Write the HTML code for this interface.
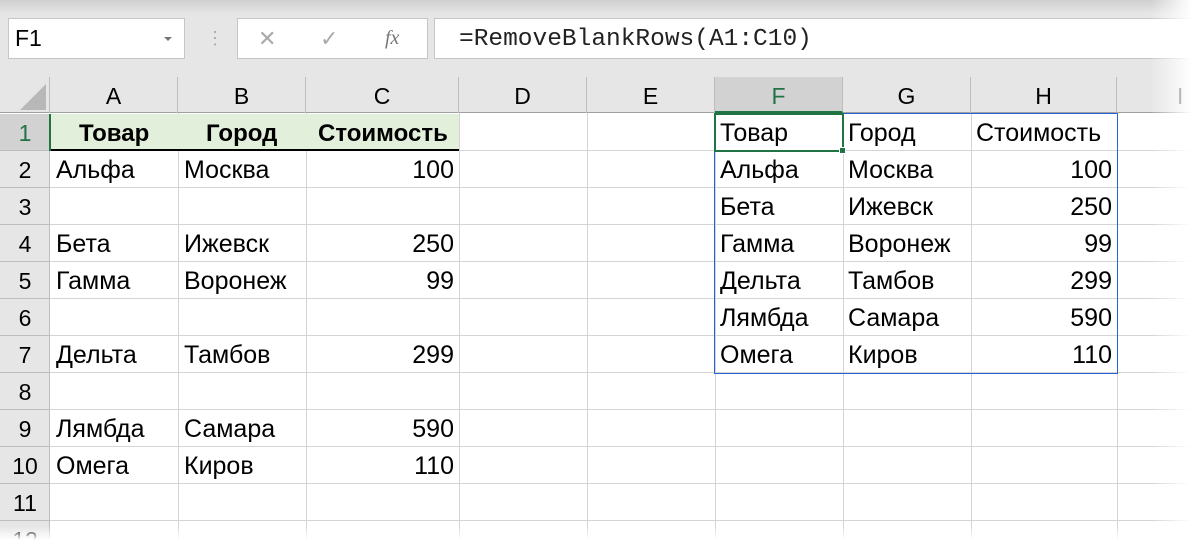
<!DOCTYPE html><html><head><meta charset="utf-8"><style>
html,body{margin:0;width:1202px;height:546px;overflow:hidden}
body{background:#fff;font-family:"Liberation Sans",sans-serif;position:relative}
.a{position:absolute;box-sizing:border-box}
.t{position:absolute;font-size:25px;line-height:37px;color:#000;white-space:nowrap}
.b{font-size:24px;font-weight:bold}
.h{position:absolute;top:77px;height:36px;line-height:38px;text-align:center;font-size:23px;color:#000;border-right:1px solid #bdbdbd;box-sizing:border-box}
.r{position:absolute;left:0;width:50px;height:37px;line-height:39px;text-align:center;font-size:23px;color:#000;background:#e6e6e6;border-bottom:1px solid #bdbdbd;box-sizing:border-box}
</style></head><body>
<div class="a" style="left:0;top:0;width:1202px;height:77px;background:#e6e6e6"></div>
<div class="a" style="left:0;top:0;width:1202px;height:14px;background:linear-gradient(#cfcfcf,#e6e6e6)"></div>
<div class="a" style="left:8px;top:18px;width:177px;height:41px;background:#fff;border:1px solid #c6c6c6"></div>
<div class="t" style="left:15px;top:20px;font-size:23px">F1</div>
<div class="a" style="left:164px;top:37px;width:0;height:0;border-left:4px solid transparent;border-right:4px solid transparent;border-top:4px solid #777"></div>
<div class="t" style="left:206px;top:20px;color:#aaa;font-size:18px">⋮</div>
<div class="a" style="left:237px;top:18px;width:191px;height:41px;background:#fff;border:1px solid #c6c6c6"></div>
<div class="t" style="left:258px;top:20px;color:#aaa;font-size:22px">✕</div>
<div class="t" style="left:320px;top:20px;color:#aaa;font-size:22px">✓</div>
<div class="t" style="left:385px;top:20px;color:#777;font-size:20px;font-family:'Liberation Serif',serif;font-style:italic">fx</div>
<div class="a" style="left:434px;top:18px;width:780px;height:41px;background:#fff;border:1px solid #c6c6c6"></div>
<div class="t" style="left:459px;top:21px;font-family:'Liberation Mono',monospace;font-size:24.5px;color:#222">=RemoveBlankRows(A1:C10)</div>

<div class="a" style="left:0;top:77px;width:1202px;height:36px;background:#e6e6e6;border-bottom:1px solid #a0a0a0"></div>
<div class="a" style="left:20px;top:84px;width:0;height:0;border-left:26px solid transparent;border-bottom:26px solid #b8b8b8"></div>
<div class="h" style="left:0;width:50px;border-right:1px solid #bdbdbd"></div>
<div class="h" style="left:50px;width:128px">A</div>
<div class="h" style="left:178px;width:128px">B</div>
<div class="h" style="left:306px;width:153px">C</div>
<div class="h" style="left:459px;width:128px">D</div>
<div class="h" style="left:587px;width:128px">E</div>
<div class="h" style="left:715px;width:128px;background:#d2d2d2;color:#217346;border-bottom:2px solid #217346">F</div>
<div class="h" style="left:843px;width:128px">G</div>
<div class="h" style="left:971px;width:146px">H</div>
<div class="h" style="left:1117px;width:128px;text-align:left;padding-left:60px;border:none">I</div>

<svg class="a" style="left:0;top:113px" width="1202" height="433">
<g stroke="#d4d4d4" stroke-width="1">
<line x1="178.5" y1="0" x2="178.5" y2="433"/><line x1="306.5" y1="0" x2="306.5" y2="433"/><line x1="459.5" y1="0" x2="459.5" y2="433"/><line x1="587.5" y1="0" x2="587.5" y2="433"/><line x1="715.5" y1="0" x2="715.5" y2="433"/><line x1="843.5" y1="0" x2="843.5" y2="433"/><line x1="971.5" y1="0" x2="971.5" y2="433"/><line x1="1117.5" y1="0" x2="1117.5" y2="433"/>
<line x1="50" y1="37.5" x2="1202" y2="37.5"/><line x1="50" y1="74.5" x2="1202" y2="74.5"/><line x1="50" y1="111.5" x2="1202" y2="111.5"/><line x1="50" y1="148.5" x2="1202" y2="148.5"/><line x1="50" y1="185.5" x2="1202" y2="185.5"/><line x1="50" y1="222.5" x2="1202" y2="222.5"/><line x1="50" y1="259.5" x2="1202" y2="259.5"/><line x1="50" y1="296.5" x2="1202" y2="296.5"/><line x1="50" y1="333.5" x2="1202" y2="333.5"/><line x1="50" y1="370.5" x2="1202" y2="370.5"/><line x1="50" y1="407.5" x2="1202" y2="407.5"/>
</g></svg>
<div class="a" style="left:50px;top:114px;width:409px;height:37px;background:#e2efda;border-bottom:2px solid #000"></div>

<div class="r" style="top:114px;color:#217346;background:#d2d2d2">1</div>
<div class="a" style="left:49px;top:114px;width:2px;height:37px;background:#217346"></div>
<div class="r" style="top:151px">2</div><div class="r" style="top:188px">3</div><div class="r" style="top:225px">4</div><div class="r" style="top:262px">5</div><div class="r" style="top:299px">6</div><div class="r" style="top:336px">7</div><div class="r" style="top:373px">8</div><div class="r" style="top:410px">9</div><div class="r" style="top:447px">10</div><div class="r" style="top:484px">11</div><div class="r" style="top:521px">12</div>
<div class="a" style="left:49px;top:151px;width:1px;height:400px;background:#bdbdbd"></div>

<div class="t b" style="left:79px;top:115px">Товар</div>
<div class="t b" style="left:206px;top:115px">Город</div>
<div class="t b" style="left:318px;top:115px">Стоимость</div>
<div class="t" style="left:56px;top:152px">Альфа</div><div class="t" style="left:184px;top:152px">Москва</div><div class="t" style="right:748px;top:152px">100</div>
<div class="t" style="left:56px;top:226px">Бета</div><div class="t" style="left:184px;top:226px">Ижевск</div><div class="t" style="right:748px;top:226px">250</div>
<div class="t" style="left:56px;top:263px">Гамма</div><div class="t" style="left:184px;top:263px">Воронеж</div><div class="t" style="right:748px;top:263px">99</div>
<div class="t" style="left:56px;top:337px">Дельта</div><div class="t" style="left:184px;top:337px">Тамбов</div><div class="t" style="right:748px;top:337px">299</div>
<div class="t" style="left:56px;top:411px">Лямбда</div><div class="t" style="left:184px;top:411px">Самара</div><div class="t" style="right:748px;top:411px">590</div>
<div class="t" style="left:56px;top:448px">Омега</div><div class="t" style="left:184px;top:448px">Киров</div><div class="t" style="right:748px;top:448px">110</div>

<div class="t" style="left:720px;top:115px">Товар</div><div class="t" style="left:848px;top:115px">Город</div><div class="t" style="left:976px;top:115px">Стоимость</div>
<div class="t" style="left:720px;top:152px">Альфа</div><div class="t" style="left:848px;top:152px">Москва</div><div class="t" style="right:90px;top:152px">100</div>
<div class="t" style="left:720px;top:189px">Бета</div><div class="t" style="left:848px;top:189px">Ижевск</div><div class="t" style="right:90px;top:189px">250</div>
<div class="t" style="left:720px;top:226px">Гамма</div><div class="t" style="left:848px;top:226px">Воронеж</div><div class="t" style="right:90px;top:226px">99</div>
<div class="t" style="left:720px;top:263px">Дельта</div><div class="t" style="left:848px;top:263px">Тамбов</div><div class="t" style="right:90px;top:263px">299</div>
<div class="t" style="left:720px;top:300px">Лямбда</div><div class="t" style="left:848px;top:300px">Самара</div><div class="t" style="right:90px;top:300px">590</div>
<div class="t" style="left:720px;top:337px">Омега</div><div class="t" style="left:848px;top:337px">Киров</div><div class="t" style="right:90px;top:337px">110</div>

<div class="a" style="left:714px;top:113px;width:404px;height:261px;border:1px solid #2563d8"></div>
<div class="a" style="left:714px;top:113px;width:130px;height:39px;border:2px solid #217346"></div>
<div class="a" style="left:839px;top:147px;width:7px;height:7px;background:#217346;border:1px solid #fff"></div>

<div class="a" style="left:1150px;top:0;width:52px;height:546px;background:linear-gradient(90deg,rgba(255,255,255,0),#fff 80%)"></div>
<div class="a" style="left:0;top:526px;width:1202px;height:20px;background:linear-gradient(rgba(255,255,255,0),#fff 70%)"></div>
</body></html>
